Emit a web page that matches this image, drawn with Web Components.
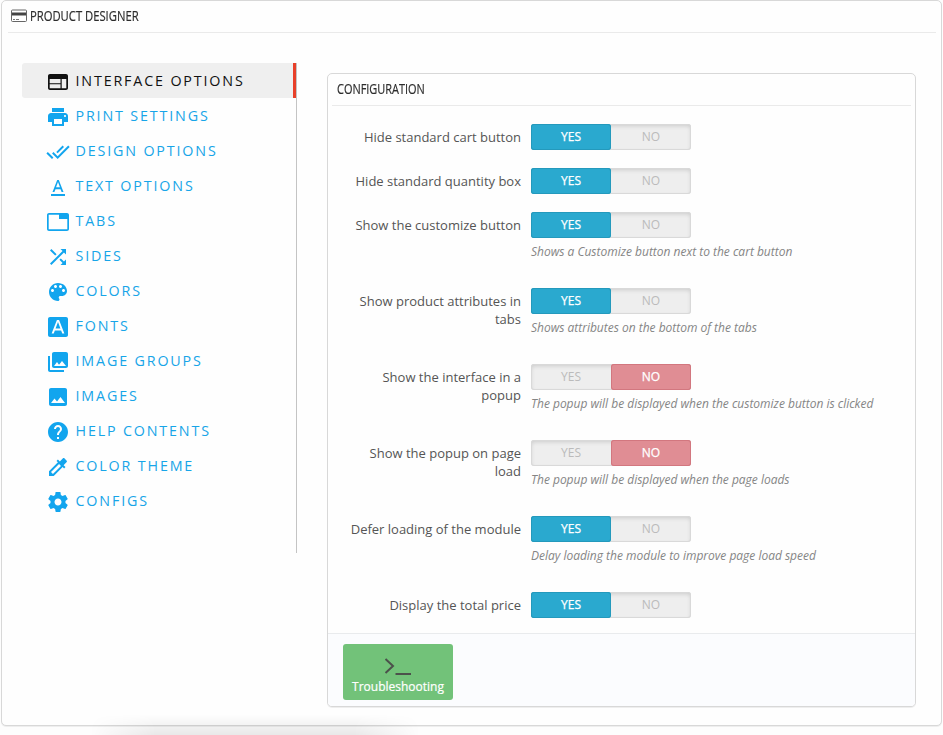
<!DOCTYPE html>
<html lang="en">
<head>
<meta charset="utf-8">
<title>Product Designer</title>
<style>
html,body{margin:0;padding:0}
body{width:943px;height:735px;overflow:hidden;background:#fdfdfd;font-family:"Open Sans","Noto Sans",sans-serif;color:#555}
</style>
</head>
<body>
<designer-app></designer-app>
<script>
const ICONS = {
  web:'<path d="M20 4H4c-1.100 0-1.990.900-1.990 2L2 18c0 1.100.900 2 2 2h16c1.100 0 2-.900 2-2V6c0-1.100-.900-2-2-2zm-5.500 14.300H3.700v-4h10.800v4zm0-5H3.700V9h10.800v4.300zm5.800 5h-4.600V9h4.600v9.300z"/>',
  print:'<path d="M19 8H5c-1.660 0-3 1.340-3 3v6h4v4h12v-4h4v-6c0-1.660-1.340-3-3-3zm-3 11H8v-5h8v5zm3-7c-.550 0-1-.450-1-1s.450-1 1-1 1 .450 1 1-.450 1-1 1zm-1-9H6v4h12V3z"/>',
  doneall:'<path d="M18 7l-1.410-1.410-6.340 6.340 1.410 1.410L18 7zm4.240-1.410L11.660 16.170 7.480 12l-1.410 1.410L11.660 19l12-12-1.420-1.410zM.410 13.410L6 19l1.410-1.410L1.830 12 .410 13.410z"/>',
  text:'<path d="M5 19v2h14v-2H5zM6.500 17h1.900l1.100-2.800h5l1.100 2.800h1.900L12.800 5h-1.600L6.500 17zM12 6.900l1.950 5.400h-3.900L12 6.900z"/>',
  tab:'<path d="M21 3H3c-1.100 0-2 .900-2 2v14c0 1.100.900 2 2 2h18c1.100 0 2-.900 2-2V5c0-1.100-.900-2-2-2zm.3 16.300H2.700V4.700H13V9h8.300v10.300z"/>',
  shuffle:'<path d="M10.590 9.170L5.410 4 4 5.410l5.170 5.170 1.420-1.410zM14.500 4l2.040 2.040L4 18.590 5.410 20 17.960 7.460 20 9.500V4h-5.500zm.330 9.410l-1.410 1.410 3.130 3.130L14.500 20H20v-5.500l-2.040 2.040-3.130-3.130z"/>',
  palette:'<path d="M12 3c-4.970 0-9 4.030-9 9s4.030 9 9 9c.830 0 1.500-.670 1.500-1.500 0-.390-.150-.740-.390-1.010-.230-.260-.380-.610-.380-.990 0-.830.670-1.500 1.500-1.500H16c2.760 0 5-2.240 5-5 0-4.420-4.030-8-9-8zm-5.500 9c-.830 0-1.500-.670-1.500-1.500S5.670 9 6.500 9 8 9.670 8 10.500 7.330 12 6.500 12zm3-4C8.670 8 8 7.330 8 6.500S8.670 5 9.500 5s1.500.670 1.500 1.500S10.330 8 9.500 8zm5 0c-.830 0-1.500-.670-1.500-1.500S13.670 5 14.500 5s1.500.670 1.500 1.500S15.330 8 14.500 8zm3 4c-.830 0-1.500-.670-1.500-1.500S16.670 9 17.500 9s1.500.670 1.500 1.500-.670 1.500-1.500 1.500z"/>',
  font:'<path fill-rule="evenodd" d="M4 2h16c1.100 0 2 .900 2 2v16c0 1.100-.900 2-2 2H4c-1.100 0-2-.900-2-2V4c0-1.100.900-2 2-2zM5.630 18.500h2.100l1.120-3h6.290l1.120 3h2.100L13.070 5h-2.140L5.630 18.500zM9.550 13.500L12 7.030l2.440 6.470H9.550z"/>',
  groups:'<path d="M22 16V4c0-1.100-.900-2-2-2H8c-1.100 0-2 .900-2 2v12c0 1.100.900 2 2 2h12c1.100 0 2-.900 2-2zm-11-4l2.030 2.710L16 11l4 5H8l3-4zM2 6v14c0 1.100.900 2 2 2h14v-2H4V6H2z"/>',
  image:'<path d="M21 19V5c0-1.100-.900-2-2-2H5c-1.100 0-2 .900-2 2v14c0 1.100.900 2 2 2h14c1.100 0 2-.900 2-2zM8.500 13.500l2.500 3.010L14.500 12l4.500 6H5l3.500-4.500z"/>',
  help:'<path d="M12 2C6.480 2 2 6.480 2 12s4.480 10 10 10 10-4.480 10-10S17.520 2 12 2zm1 17h-2v-2h2v2zm2.070-7.750l-.900.920C13.450 12.900 13 13.500 13 15h-2v-.500c0-1.100.450-2.100 1.170-2.830l1.240-1.260c.370-.360.590-.860.590-1.410 0-1.100-.900-2-2-2s-2 .900-2 2H8c0-2.210 1.790-4 4-4s4 1.790 4 4c0 .880-.360 1.680-.930 2.250z"/>',
  picker:'<path d="M20.710 5.630l-2.340-2.340c-.390-.390-1.020-.390-1.410 0l-3.120 3.120-1.930-1.910-1.410 1.410 1.420 1.420L3 16.250V21h4.750l8.920-8.920 1.420 1.420 1.410-1.410-1.920-1.920 3.120-3.120c.400-.400.400-1.030.010-1.420zM6.920 19L5 17.080l8.060-8.060 1.920 1.920L6.920 19z"/>',
  gear:'<path d="M19.430 12.980c.040-.320.070-.640.070-.980s-.030-.660-.070-.980l2.110-1.650c.190-.150.240-.420.120-.640l-2-3.460c-.120-.220-.390-.300-.610-.220l-2.490 1c-.520-.400-1.080-.730-1.690-.980l-.380-2.650C14.460 2.180 14.250 2 14 2h-4c-.250 0-.460.180-.490.420l-.380 2.650c-.610.250-1.170.590-1.690.980l-2.490-1c-.230-.090-.490 0-.610.220l-2 3.460c-.130.220-.070.490.120.640l2.110 1.650c-.040.320-.070.650-.070.980s.030.660.070.980l-2.110 1.650c-.190.150-.240.420-.120.640l2 3.460c.120.220.390.300.610.220l2.490-1c.520.400 1.080.730 1.690.980l.380 2.650c.030.240.240.420.490.420h4c.250 0 .460-.180.490-.420l.380-2.650c.610-.250 1.170-.590 1.690-.980l2.490 1c.230.090.490 0 .610-.220l2-3.460c.120-.220.070-.490-.120-.640l-2.110-1.650zM12 15.500c-1.930 0-3.500-1.570-3.500-3.500s1.570-3.500 3.500-3.500 3.500 1.570 3.500 3.500-1.570 3.500-3.500 3.500z"/>'
};

class PanelTitle extends HTMLElement {
  connectedCallback() {
    this.attachShadow({mode:'open'}).innerHTML = `<style>
      :host{display:flex;align-items:center;flex:none;border-bottom:1px solid #eaeaea;box-sizing:border-box;padding-bottom:2px;color:#2c2c2c}
      .t{font-size:15px;line-height:20px;margin-bottom:2px;white-space:nowrap;transform:scaleX(var(--squeeze,.8));transform-origin:0 50%;-webkit-text-stroke:.2px currentColor}
    </style><slot name="icon"></slot><span class="t"><slot></slot></span>`;
  }
}
customElements.define('panel-title', PanelTitle);

class MenuItem extends HTMLElement {
  connectedCallback() {
    this.attachShadow({mode:'open'}).innerHTML = `<style>
      :host{display:flex;align-items:center;height:35px;box-sizing:border-box;padding-left:24px;color:#17a5e8;letter-spacing:1.84px;font-size:14.3px;white-space:nowrap}
      :host([active]){background:#efefef;color:#111;border-right:3px solid #e8402a;border-radius:3px 0 0 3px}
      svg{width:24px;height:24px;fill:#12a5ee;margin-right:5.500px;position:relative;top:1px}
      :host([active]) svg{fill:#111}
      span{line-height:20px}
    </style><svg viewBox="0 0 24 24">${ICONS[this.getAttribute('icon')]}</svg><span><slot></slot></span>`;
  }
}
customElements.define('menu-item', MenuItem);

class SideMenu extends HTMLElement {
  connectedCallback() {
    this.attachShadow({mode:'open'}).innerHTML = `<style>
      :host{display:flex;flex-direction:column;width:275px;height:490px;box-sizing:border-box;background:linear-gradient(#c4c4c4,#c4c4c4) right/1px 100% no-repeat}
      ::slotted([active]){margin-right:1px}
    </style><slot></slot>`;
  }
}
customElements.define('side-menu', SideMenu);

class YesNo extends HTMLElement {
  connectedCallback() {
    this.attachShadow({mode:'open'}).innerHTML = `<style>
      :host{display:grid;grid-template-columns:1fr 1fr;width:160px;height:26px;border-radius:3px;background:#eee;box-shadow:inset 0 0 0 1px #d9d9d9,inset 0 2px 4px rgba(0,0,0,.15);font-size:12px;text-align:center;line-height:25px;color:#bbb}
      .on{color:#fff;border-radius:3px;background:#2aa9cf;box-shadow:inset 0 0 0 1px #2499bc;-webkit-text-stroke:.25px #fff}
      .no.on{background:#e08d94;box-shadow:inset 0 0 0 1px #d2777f}
    </style><span class="yes">YES</span><span class="no">NO</span>`;
    this.shadowRoot.querySelector(this.getAttribute('value')==='no'?'.no':'.yes').classList.add('on');
  }
}
customElements.define('yes-no', YesNo);

class OptionRow extends HTMLElement {
  connectedCallback() {
    const help = this.getAttribute('help');
    this.attachShadow({mode:'open'}).innerHTML = `<style>
      :host{display:grid;grid-template-columns:178px 1fr;column-gap:10px;min-height:44px}
      label{font-size:13px;line-height:18px;padding-top:4px;text-align:right;color:#555}
      p{margin:5px 0 18px;height:27px;font-size:12px;line-height:18px;letter-spacing:-.01px;font-style:italic;color:#858585;white-space:nowrap}
    </style><label><slot></slot></label><div><yes-no value="${this.getAttribute('value')}"></yes-no>${help?`<p>${help}</p>`:''}</div>`;
  }
}
customElements.define('option-row', OptionRow);

class ConfigPanel extends HTMLElement {
  connectedCallback() {
    this.attachShadow({mode:'open'}).innerHTML = `<style>
      :host{display:flex;flex-direction:column;box-sizing:border-box;width:589px;height:634px;border:1px solid #d8d8d8;border-radius:5px;overflow:hidden;background:#fefefe;box-shadow:0 1px 0 #eee}
      panel-title{height:32px;margin:0 4px;padding-left:5px;--squeeze:.73}
      .rows{box-sizing:border-box;padding:18px 15px 0;flex:1 1 0;min-height:0}
      footer{flex:none;box-sizing:border-box;height:73px;border-top:1px solid #e9ebed;background:#fbfcfe;padding:10px 15px}
      button{display:flex;flex-direction:column;align-items:center;width:110px;height:56px;border:0;border-radius:3px;background:#72c279;padding:13px 0 0;font:12px/18px "Open Sans",sans-serif;color:#fff}
      svg{width:28px;height:20px;display:block;flex:none}
      button span{white-space:nowrap;margin-top:1px;-webkit-text-stroke:.2px #fff}
    </style><panel-title>CONFIGURATION</panel-title>
    <div class="rows"><slot></slot></div>
    <footer><button><svg viewBox="0 0 28 20" fill="none" stroke="#4c514b" stroke-width="2"><path d="M1.500 2l7.500 7-7.500 7M11.500 17H27"/></svg><span>Troubleshooting</span></button></footer>`;
  }
}
customElements.define('config-panel', ConfigPanel);

class DesignerApp extends HTMLElement {
  connectedCallback() {
    this.attachShadow({mode:'open'}).innerHTML = `<style>
      :host{display:block;position:relative;width:943px;height:735px;padding:0 1px;box-sizing:border-box;overflow:hidden}
      .panel{box-sizing:border-box;width:941px;height:726px;border:1px solid #d8d8d8;border-radius:5px;background:#fefefe;box-shadow:0 1px 0 #eee}
      .panel>panel-title{height:32px;margin:0 5px 0 6px;padding-left:3px;--squeeze:.75}
      .card{width:16px;height:13px;margin-right:2.500px}
      .body{display:grid;grid-template-columns:275px 589px;column-gap:30px;padding:30px 0 0 20px}
      config-panel{margin-top:10px}
      .haze{position:absolute;left:90px;top:714px;width:330px;height:21px;background:linear-gradient(rgba(0,0,0,0),rgba(0,0,0,.08));-webkit-mask:linear-gradient(90deg,transparent,#000 20%,#000 80%,transparent)}
    </style>
    <div class="panel">
      <panel-title><svg slot="icon" class="card" viewBox="0 0 16 13"><rect x=".5" y="1" width="15" height="11.500" rx="1" fill="#fff" stroke="#666"/><path fill="#444" d="M1 3.500h14V6.500H1z"/><path fill="#777" d="M2 10h2v1H2zM5 10h3v1H5z"/></svg>PRODUCT DESIGNER</panel-title>
      <div class="body">
        <side-menu>
          <menu-item icon="web" active>INTERFACE OPTIONS</menu-item>
          <menu-item icon="print">PRINT SETTINGS</menu-item>
          <menu-item icon="doneall">DESIGN OPTIONS</menu-item>
          <menu-item icon="text">TEXT OPTIONS</menu-item>
          <menu-item icon="tab">TABS</menu-item>
          <menu-item icon="shuffle">SIDES</menu-item>
          <menu-item icon="palette">COLORS</menu-item>
          <menu-item icon="font">FONTS</menu-item>
          <menu-item icon="groups">IMAGE GROUPS</menu-item>
          <menu-item icon="image">IMAGES</menu-item>
          <menu-item icon="help">HELP CONTENTS</menu-item>
          <menu-item icon="picker">COLOR THEME</menu-item>
          <menu-item icon="gear">CONFIGS</menu-item>
        </side-menu>
        <config-panel>
          <option-row value="yes">Hide standard cart button</option-row>
          <option-row value="yes">Hide standard quantity box</option-row>
          <option-row value="yes" help="Shows a Customize button next to the cart button">Show the customize button</option-row>
          <option-row value="yes" help="Shows attributes on the bottom of the tabs">Show product attributes in tabs</option-row>
          <option-row value="no" help="The popup will be displayed when the customize button is clicked">Show the interface in a popup</option-row>
          <option-row value="no" help="The popup will be displayed when the page loads">Show the popup on page load</option-row>
          <option-row value="yes" help="Delay loading the module to improve page load speed">Defer loading of the module</option-row>
          <option-row value="yes">Display the total price</option-row>
        </config-panel>
      </div>
    </div>
    <div class="haze"></div>`;
  }
}
customElements.define('designer-app', DesignerApp);
</script>
</body>
</html>
